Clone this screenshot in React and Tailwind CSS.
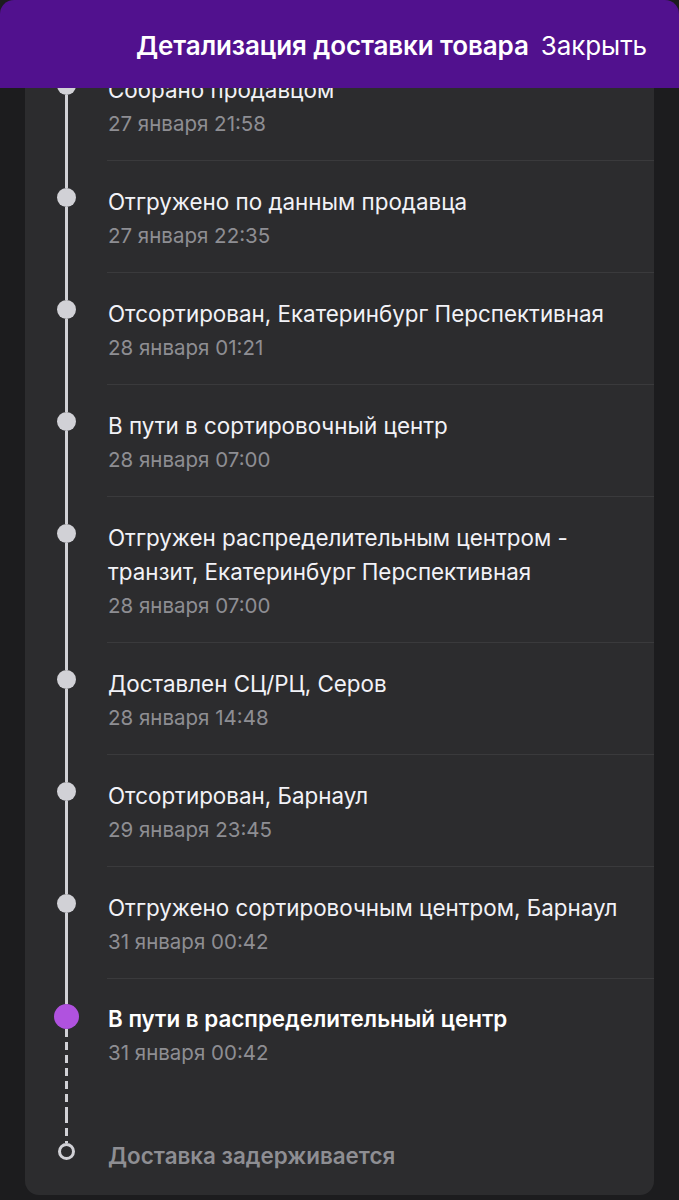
import React from 'react';

const events = [
  { title: 'Собрано продавцом', date: '27 января 21:58' },
  { title: 'Отгружено по данным продавца', date: '27 января 22:35' },
  { title: 'Отсортирован, Екатеринбург Перспективная', date: '28 января 01:21' },
  { title: 'В пути в сортировочный центр', date: '28 января 07:00' },
  { title: 'Отгружен распределительным центром - транзит, Екатеринбург Перспективная', date: '28 января 07:00' },
  { title: 'Доставлен СЦ/РЦ, Серов', date: '28 января 14:48' },
  { title: 'Отсортирован, Барнаул', date: '29 января 23:45' },
  { title: 'Отгружено сортировочным центром, Барнаул', date: '31 января 00:42' },
];

const Dashed = ({ className }) => (
  <div
    className={`w-[3px] ${className}`}
    style={{ backgroundImage: 'repeating-linear-gradient(to bottom, #d1d1d6 0 8px, transparent 8px 13px)' }}
  />
);

const Row = ({ title, date }) => (
  <div className="flex">
    <div className="w-[82px] shrink-0 flex flex-col items-center">
      <div className="w-[3px] h-[27px] bg-[#d1d1d6]" />
      <div className="w-[19px] h-[19px] rounded-full bg-[#d1d1d6]" />
      <div className="w-[3px] flex-1 bg-[#d1d1d6]" />
    </div>
    <div className="flex-1 pl-[1px] pt-[24px] pb-[19px] border-b border-[#3a3a3c]">
      <div className="text-[22.4px] leading-[34px] text-[#f2f2f7] pr-2">{title}</div>
      <div className="text-[20.5px] leading-[34px] text-[#8e8e93]">{date}</div>
    </div>
  </div>
);

const App = () => {
  return (
    <div
      className="w-[679px] h-[1200px] overflow-hidden bg-[#1c1c1e]"
      style={{ fontFamily: 'Inter, "Noto Sans", sans-serif' }}
    >
      <div className="relative z-10 h-[88px] bg-[#51118e] rounded-t-[14px] flex items-center justify-end gap-[12px] pr-[32px] pt-[2px]">
        <span className="text-[26px] font-semibold text-white tracking-[-0.1px]">Детализация доставки товара</span>
        <span className="text-[26px] text-white tracking-[-0.1px]">Закрыть</span>
      </div>

      <div className="mx-[25px] -mt-[39px] bg-[#2c2c2e] rounded-b-[14px]">
        {events.map((e, i) => (
          <Row key={i} title={e.title} date={e.date} />
        ))}

        <div className="flex">
          <div className="w-[82px] shrink-0 flex flex-col items-center">
            <div className="w-[3px] h-[25px] bg-[#d1d1d6]" />
            <div className="w-[25px] h-[25px] rounded-full bg-[#b052df]" />
            <Dashed className="flex-1" />
          </div>
          <div className="flex-1 pl-[1px] pt-[23px] pb-[45px]">
            <div className="text-[22.4px] leading-[34px] font-semibold text-white">В пути в распределительный центр</div>
            <div className="text-[20.5px] leading-[34px] text-[#8e8e93]">31 января 00:42</div>
          </div>
        </div>

        <div className="flex">
          <div className="w-[82px] shrink-0 flex flex-col items-center">
            <Dashed className="h-[28px]" />
            <div className="w-[17px] h-[17px] rounded-full border-[3px] border-[#d1d1d6]" />
          </div>
          <div className="flex-1 pl-[1px] pt-[24px] pb-[22px]">
            <div className="text-[22.4px] leading-[34px] font-semibold text-[#8e8e93]">Доставка задерживается</div>
          </div>
        </div>
      </div>
    </div>
  );
};

export default App;
